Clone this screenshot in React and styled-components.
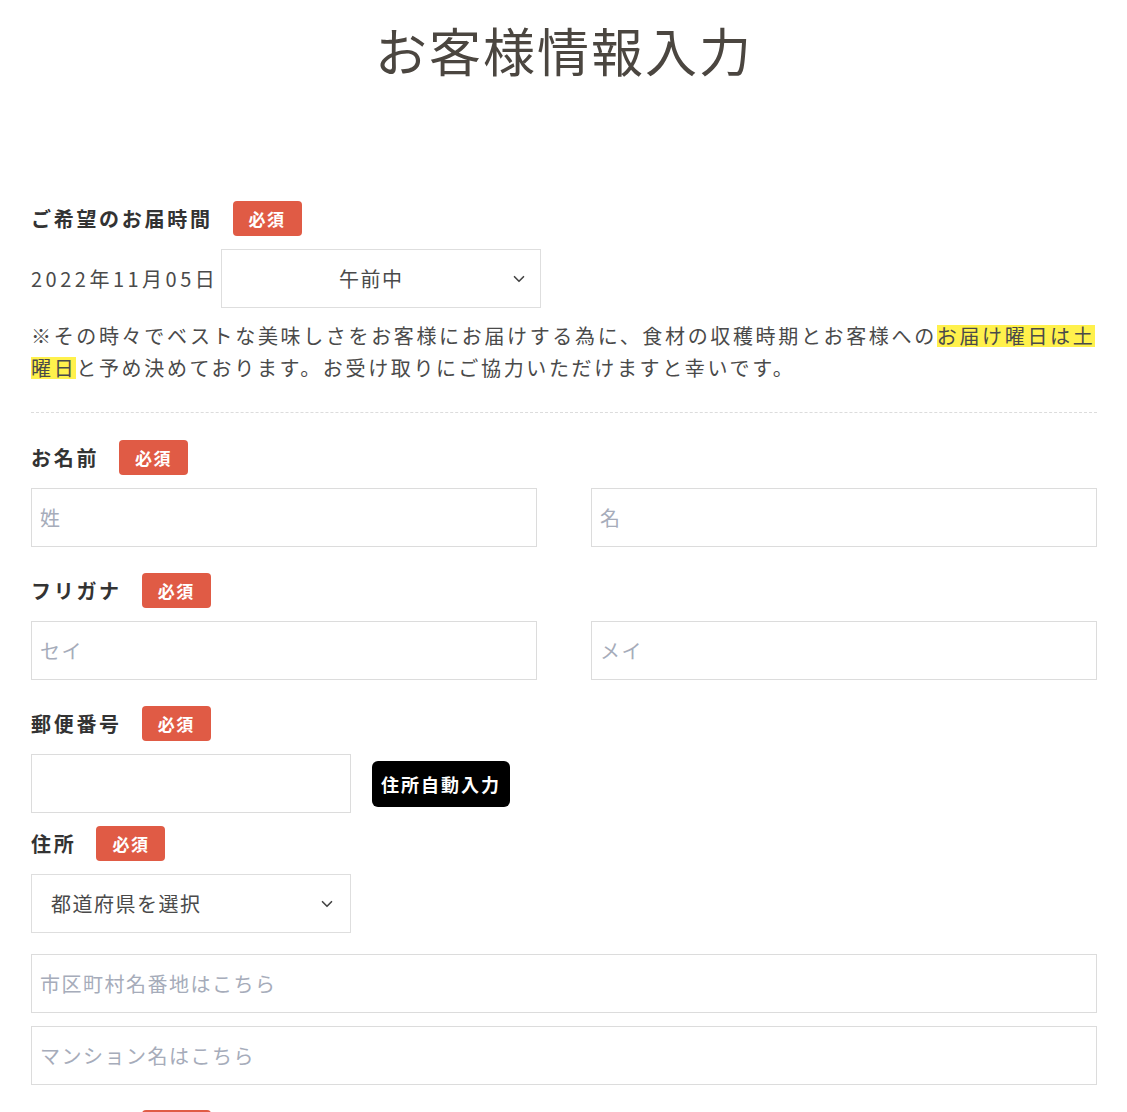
import styled, { createGlobalStyle } from "styled-components";
import { ChevronDown } from "lucide-react";

const GlobalStyle = createGlobalStyle`
  body {
    margin: 0;
    background: #fff;
    font-family: "Noto Sans CJK JP", "Noto Sans", sans-serif;
    color: #4a4a4a;
  }
`;

export default function App() {
  return (
    <>
      <GlobalStyle />
      <Page>
        <Title>お客様情報入力</Title>

        <Field $after={0}>
          <LabelRow>
            <Label>ご希望のお届時間</Label>
            <Required>必須</Required>
          </LabelRow>
          <DateRow>
            <DateText>2022年11月05日</DateText>
            <SelectBox $width="320px">
              <Select $center defaultValue="am">
                <option value="am">午前中</option>
                <option value="pm">14時〜16時</option>
              </Select>
              <Chevron size={18} strokeWidth={2.2} $right="13px" />
            </SelectBox>
          </DateRow>
          <Note>
            ※その時々でベストな美味しさをお客様にお届けする為に、食材の収穫時期とお客様への
            <Mark>
              お届け曜日は土
              <br />
              曜日
            </Mark>
            と予め決めております。お受け取りにご協力いただけますと幸いです。
          </Note>
        </Field>

        <Divider />

        <Field $after={26}>
          <LabelRow>
            <Label>お名前</Label>
            <Required>必須</Required>
          </LabelRow>
          <Pair>
            <Input placeholder="姓" />
            <Input placeholder="名" />
          </Pair>
        </Field>

        <Field $after={26}>
          <LabelRow>
            <Label>フリガナ</Label>
            <Required>必須</Required>
          </LabelRow>
          <Pair>
            <Input placeholder="セイ" />
            <Input placeholder="メイ" />
          </Pair>
        </Field>

        <Field $after={13}>
          <LabelRow>
            <Label>郵便番号</Label>
            <Required>必須</Required>
          </LabelRow>
          <ZipRow>
            <Input $width="320px" />
            <AutoButton type="button">住所自動入力</AutoButton>
          </ZipRow>
        </Field>

        <Field $after={25}>
          <LabelRow>
            <Label>住所</Label>
            <Required>必須</Required>
          </LabelRow>
          <SelectBox $width="320px">
            <Select defaultValue="">
              <option value="">都道府県を選択</option>
              <option value="tokyo">東京都</option>
            </Select>
            <Chevron size={18} strokeWidth={2.2} $right="15px" />
          </SelectBox>
          <Stack>
            <Input placeholder="市区町村名番地はこちら" />
            <Input placeholder="マンション名はこちら" />
          </Stack>
        </Field>

        <Field $after={26}>
          <LabelRow>
            <Label>電話番号</Label>
            <Required>必須</Required>
          </LabelRow>
          <Input $width="320px" />
        </Field>
      </Page>
    </>
  );
}

const Page = styled.div`
  padding: 19px 30px 40px 31px;
`;

const Title = styled.h1`
  margin: 0 0 120px;
  text-align: center;
  font-size: 52px;
  line-height: 62px;
  font-weight: 400;
  letter-spacing: 2px;
  color: #4b4640;
`;

const Field = styled.section`
  margin-bottom: ${(p) => p.$after}px;
`;

const LabelRow = styled.div`
  display: flex;
  align-items: center;
  gap: 20px;
  margin-bottom: 13px;
`;

const Label = styled.span`
  font-size: 20px;
  font-weight: 700;
  letter-spacing: 2.7px;
  color: #333;
  line-height: 35px;
`;

const Required = styled.span`
  display: inline-flex;
  align-items: center;
  justify-content: center;
  width: 69px;
  height: 35px;
  border-radius: 4px;
  background: #e05b45;
  color: #fff;
  font-size: 17px;
  font-weight: 700;
  letter-spacing: 1.5px;
`;

const DateRow = styled.div`
  display: flex;
  align-items: center;
  gap: 3px;
`;

const DateText = styled.span`
  font-size: 20px;
  letter-spacing: 3.5px;
  color: #4a4a4a;
`;

const SelectBox = styled.div`
  position: relative;
  width: ${(p) => p.$width || "100%"};
`;

const Select = styled.select`
  appearance: none;
  display: block;
  width: 100%;
  height: 59px;
  box-sizing: border-box;
  border: 1px solid #dedede;
  border-radius: 0;
  background: #fff;
  padding: 0 40px 0 ${(p) => (p.$center ? "20px" : "19px")};
  text-align: ${(p) => (p.$center ? "center" : "left")};
  text-align-last: ${(p) => (p.$center ? "center" : "left")};
  font-family: inherit;
  font-size: 20px;
  letter-spacing: 1.5px;
  color: #4a4a4a;
  outline: none;
`;

const Chevron = styled(ChevronDown)`
  position: absolute;
  top: 50%;
  right: ${(p) => p.$right};
  transform: translateY(-50%);
  color: #444;
  pointer-events: none;
`;

const Note = styled.p`
  margin: 12px 0 0;
  font-size: 20px;
  line-height: 32px;
  letter-spacing: 2.65px;
  color: #4a4a4a;
`;

const Mark = styled.span`
  background: linear-gradient(
    transparent 13%,
    #fff14c 13%,
    #fff14c 88%,
    transparent 88%
  );
`;

const Divider = styled.hr`
  margin: 28px 0 27px;
  border: 0;
  border-top: 1px dashed #dcdcdc;
`;

const Pair = styled.div`
  display: grid;
  grid-template-columns: 1fr 1fr;
  column-gap: 54px;
`;

const Input = styled.input`
  display: block;
  width: ${(p) => p.$width || "100%"};
  height: 59px;
  box-sizing: border-box;
  border: 1px solid #dcdcdc;
  border-radius: 0;
  padding: 0 8px;
  font-family: inherit;
  font-size: 20px;
  letter-spacing: 1.5px;
  color: #333;
  outline: none;

  &::placeholder {
    color: #a6acba;
  }
`;

const ZipRow = styled.div`
  display: flex;
  align-items: center;
  gap: 21px;
`;

const AutoButton = styled.button`
  height: 46px;
  padding: 0 9px;
  border: 0;
  border-radius: 6px;
  background: #000;
  color: #fff;
  font-family: inherit;
  font-size: 18px;
  font-weight: 700;
  letter-spacing: 2px;
  cursor: pointer;
`;

const Stack = styled.div`
  display: flex;
  flex-direction: column;
  gap: 13px;
  margin-top: 21px;
`;
